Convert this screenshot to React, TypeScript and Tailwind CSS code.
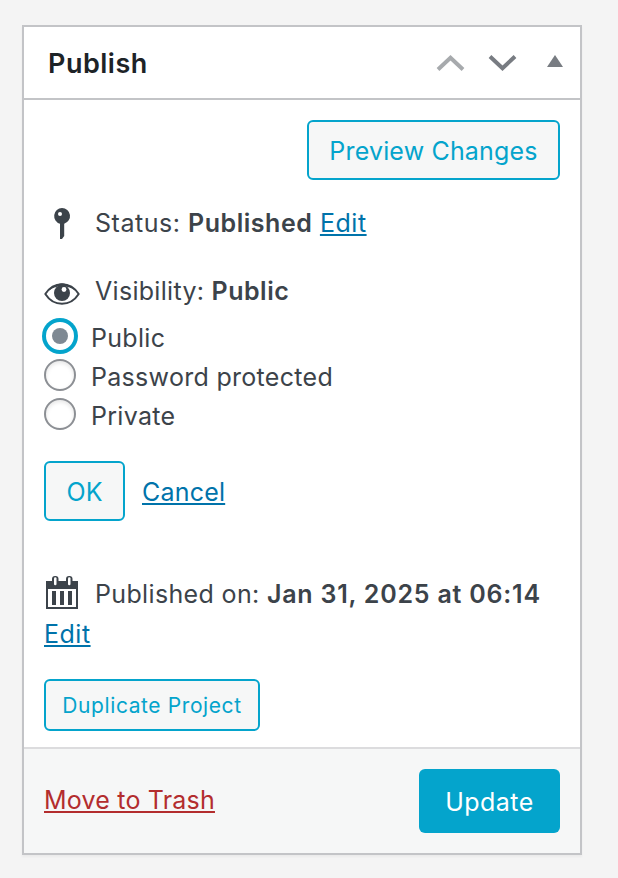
import type { ReactNode } from 'react'
import { useState } from 'react'
import clsx from 'clsx'

const visibilityOptions = [
  { id: 'public', label: 'Public' },
  { id: 'password', label: 'Password protected' },
  { id: 'private', label: 'Private' },
]

function PinIcon() {
  return (
    <svg width="36" height="36" viewBox="0 0 36 36" className="shrink-0">
      <path d="M18 3a8 8 0 0 1 2.2 15.7V31L18 34H16V18.7A8 8 0 0 1 18 3Z" fill="#3c434a" />
      <circle cx="16" cy="9" r="2" fill="#fff" />
    </svg>
  )
}

function EyeIcon() {
  return (
    <svg width="36" height="24" viewBox="0 0 36 24" className="mt-[3px] shrink-0">
      <path d="M1.3 12C5.5 5.5 11.5 2.2 18 2.2S30.5 5.5 34.7 12C30.5 18.5 24.5 21.8 18 21.8S5.5 18.5 1.3 12Z" fill="#fff" stroke="#3c434a" strokeWidth="2" strokeLinejoin="round" />
      <path d="M5 8.5C9 4 13 1.4 18 1.4S27 4 31 8.5C27 5.5 23 4.3 18 4.3S9 5.5 5 8.5Z" fill="#3c434a" />
      <circle cx="18" cy="11" r="8" fill="#3c434a" />
      <circle cx="20" cy="7.5" r="2.4" fill="#fff" />
    </svg>
  )
}

function CalendarIcon() {
  return (
    <svg width="36" height="34" viewBox="0 0 36 34" className="shrink-0" fill="#3c434a">
      <path fillRule="evenodd" d="M2 5H34V33H2ZM4 13V31H32V13Z" />
      <rect x="8" y="0" width="6.5" height="10" rx="3" />
      <rect x="22" y="0" width="6.5" height="10" rx="3" />
      <rect x="10" y="1.3" width="2.5" height="8" rx="1.25" fill="#fff" />
      <rect x="24" y="1.3" width="2.5" height="8" rx="1.25" fill="#fff" />
      <rect x="8" y="15" width="4" height="14" />
      <rect x="16" y="15" width="4" height="14" />
      <rect x="24" y="15" width="4" height="14" />
    </svg>
  )
}

function Link({ children, className }: { children: ReactNode; className?: string }) {
  return (
    <a href="#" className={clsx('underline decoration-2 underline-offset-2 [text-decoration-skip-ink:none]', className)}>
      {children}
    </a>
  )
}

function OutlineButton({ children, className }: { children: ReactNode; className?: string }) {
  return (
    <button className={clsx('flex items-center justify-center rounded-md border-2 border-[#04a4cc] bg-[#f6f7f7] text-[#04a4cc] whitespace-nowrap', className)}>
      {children}
    </button>
  )
}

export default function App() {
  const [visibility, setVisibility] = useState('public')

  return (
    <div className="min-h-screen bg-[#f4f4f4] px-[22px] pt-[25px] font-[Inter,sans-serif] text-[25px] text-[#3c434a]">
      <div className="flex h-[830px] w-[560px] flex-col border-2 border-[#c3c4c7] bg-white shadow-[0_2px_2px_rgba(0,0,0,0.04)]">
        {/* Header */}
        <div className="flex h-[73px] shrink-0 items-center justify-between border-b-2 border-[#c3c4c7] pl-6 pr-4">
          <h2 className="pt-[3px] text-[27px] font-semibold text-[#1d2327] tracking-[0.5px]">Publish</h2>
          <svg width="128" height="19" viewBox="0 0 128 19" fill="none">
            <path d="M2 16.5 14.5 4.8 27 16.5" stroke="#a7aaad" strokeWidth="4" />
            <path d="M54 3.5 66.5 15.2 79 3.5" stroke="#787c82" strokeWidth="4" />
            <path d="M111 14 119 2 127 14Z" fill="#787c82" />
          </svg>
        </div>

        {/* Publishing options */}
        <div className="flex flex-1 flex-col px-5 pt-5">
          <OutlineButton className="h-[60px] w-[253px] self-end pt-1 tracking-[0.17px]">Preview Changes</OutlineButton>

          <div className="mt-[23px] flex h-10 items-center">
            <PinIcon />
            <p className="ml-[15px] pt-0.5 tracking-[0.53px]">
              Status: <b className="font-semibold">Published</b> <Link className="text-[#0073aa]">Edit</Link>
            </p>
          </div>

          <div className="mt-[29px] flex h-10 items-center">
            <EyeIcon />
            <p className="ml-[15px] tracking-[0.3px]">
              Visibility: <b className="font-semibold tracking-[0.5px]">Public</b>
            </p>
          </div>

          <div className="mt-1 flex flex-col">
            {visibilityOptions.map((option) => (
              <label key={option.id} className="flex h-[39px] items-center">
                <input
                  type="radio"
                  name="visibility"
                  className="sr-only"
                  checked={visibility === option.id}
                  onChange={() => setVisibility(option.id)}
                />
                <span
                  className={clsx(
                    'flex size-8 shrink-0 items-center justify-center rounded-full border-2 bg-white',
                    visibility === option.id
                      ? 'border-[#04a4cc] ring-2 ring-[#04a4cc]'
                      : 'border-[#8c8f94] shadow-[inset_0_2px_4px_rgba(0,0,0,0.1)]',
                  )}
                >
                  {visibility === option.id && <span className="size-4 rounded-full bg-[#7e8993]" />}
                </span>
                <span className="ml-[15px] pt-1.5 tracking-[0.3px]">{option.label}</span>
              </label>
            ))}
          </div>

          <div className="mt-7 flex items-center">
            <OutlineButton className="h-[60px] w-[81px] pt-1">OK</OutlineButton>
            <Link className="ml-[17px] pt-1 text-[#0073aa] tracking-[0.2px]">Cancel</Link>
          </div>

          <div className="mt-[52px] flex h-10 items-center">
            <CalendarIcon />
            <p className="ml-[15px] whitespace-nowrap pt-1 tracking-[0.35px]">
              Published on: <b className="font-semibold tracking-[0.78px]">Jan 31, 2025 at 06:14</b>
            </p>
          </div>
          <div className="flex h-10 items-center pt-1">
            <Link className="text-[#0073aa] tracking-[0.5px]">Edit</Link>
          </div>

          <OutlineButton className="mt-[26px] h-[52px] w-[216px] pt-0.5 text-[21px] tracking-[0.6px]">Duplicate Project</OutlineButton>
        </div>

        {/* Actions */}
        <div className="flex h-[106px] shrink-0 items-center justify-between border-t-2 border-[#dcdcde] bg-[#f6f7f7] px-5">
          <Link className="text-[#b32d2e] tracking-[0.2px]">Move to Trash</Link>
          <button className="h-16 w-[141px] rounded-md bg-[#04a4cc] pt-1 text-white tracking-[0.45px]">Update</button>
        </div>
      </div>
    </div>
  )
}
